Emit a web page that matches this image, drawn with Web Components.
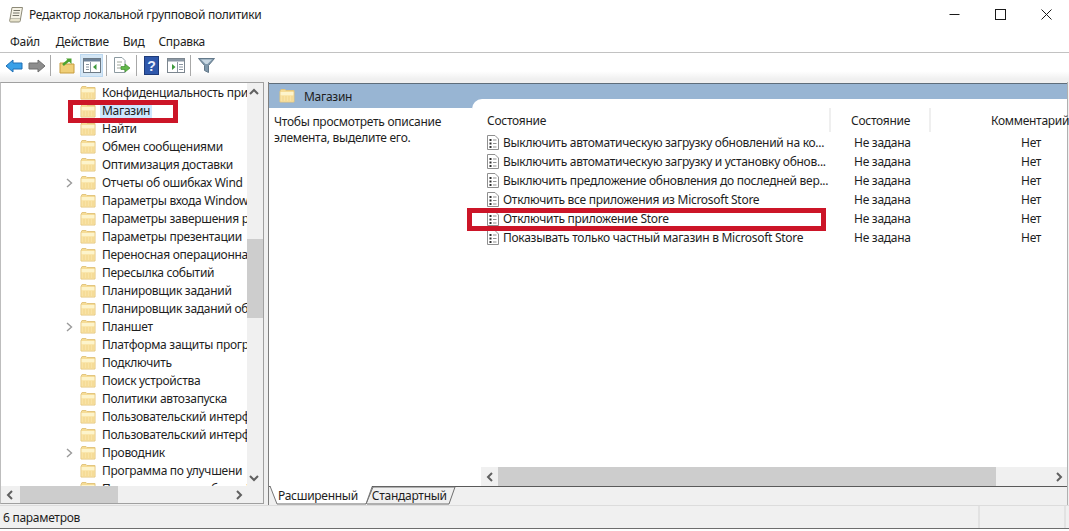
<!DOCTYPE html>
<html lang="ru">
<head>
<meta charset="utf-8">
<title>Редактор локальной групповой политики</title>
<style>
	html, body { margin: 0; padding: 0; background: #fff; }
	body { font: 12px "Noto Sans", "Liberation Sans", sans-serif; color: #1e1e1e; letter-spacing: -0.28px; }
</style>
</head>
<body>
<app-window>
	<win-titlebar slot="title">Редактор локальной групповой политики</win-titlebar>
	<win-menubar slot="menu">
		<span>Файл</span><span>Действие</span><span>Вид</span><span>Справка</span>
	</win-menubar>
	<win-toolbar slot="tools"></win-toolbar>
	<tree-panel slot="tree">
		<tree-item>Конфиденциальность при</tree-item>
		<tree-item selected>Магазин</tree-item>
		<tree-item>Найти</tree-item>
		<tree-item>Обмен сообщениями</tree-item>
		<tree-item>Оптимизация доставки</tree-item>
		<tree-item expandable>Отчеты об ошибках Wind</tree-item>
		<tree-item>Параметры входа Window</tree-item>
		<tree-item>Параметры завершения р</tree-item>
		<tree-item>Параметры презентации</tree-item>
		<tree-item>Переносная операционна</tree-item>
		<tree-item>Пересылка событий</tree-item>
		<tree-item>Планировщик заданий</tree-item>
		<tree-item>Планировщик заданий об</tree-item>
		<tree-item expandable>Планшет</tree-item>
		<tree-item>Платформа защиты прогр</tree-item>
		<tree-item>Подключить</tree-item>
		<tree-item>Поиск устройства</tree-item>
		<tree-item>Политики автозапуска</tree-item>
		<tree-item>Пользовательский интерф</tree-item>
		<tree-item>Пользовательский интерф</tree-item>
		<tree-item expandable>Проводник</tree-item>
		<tree-item>Программа по улучшени</tree-item>
		<tree-item>Предварительная сборка Wind</tree-item>
	</tree-panel>
	<detail-panel slot="detail" heading="Магазин">
		<span slot="desc">Чтобы просмотреть описание элемента, выделите его.</span>
		<policy-row status="Не задана" note="Нет">Выключить автоматическую загрузку обновлений на ко...</policy-row>
		<policy-row status="Не задана" note="Нет">Выключить автоматическую загрузку и установку обнов...</policy-row>
		<policy-row status="Не задана" note="Нет">Выключить предложение обновления до последней вер...</policy-row>
		<policy-row status="Не задана" note="Нет">Отключить все приложения из Microsoft Store</policy-row>
		<policy-row status="Не задана" note="Нет">Отключить приложение Store</policy-row>
		<policy-row status="Не задана" note="Нет">Показывать только частный магазин в Microsoft Store</policy-row>
	</detail-panel>
	<win-statusbar slot="status">6 параметров</win-statusbar>
	<red-mark slot="marks" style="left:68px;top:100px;width:110px;height:23px"></red-mark>
	<red-mark slot="marks" style="left:467px;top:208px;width:359px;height:23px"></red-mark>
</app-window>

<script>
const FOLDER = `
	<svg width="16" height="14" viewBox="0 0 16 14">
		<path d="M1 2.5 L1 13 L15 13 L15 1.5 L7 1.5 L6 0.5 L2 0.5 Z" fill="#f6dc96" stroke="#e3c67f" stroke-width="1"/>
		<rect x="1.5" y="3" width="13" height="3.5" fill="#fdf4cc"/>
		<rect x="1.5" y="6.5" width="13" height="6" fill="#f9e3a6"/>
		<path d="M4 7v5M7 7v5M10 7v5M13 7v5" stroke="#f2d589" stroke-width="1"/>
	</svg>`;

class AppWindow extends HTMLElement {
	constructor() {
		super();
		this.attachShadow({ mode: 'open' });
		this.shadowRoot.innerHTML = `
			<style>
				:host { display: flex; flex-direction: column; position: relative; width: 1069px; height: 531px; overflow: hidden; background: #fff; }
				.main { display: flex; height: 426px; padding-top: 3px; box-sizing: border-box; background: #f0f0f0; gap: 4px; padding-right: 1px; }
				.foot { border-bottom: 1px solid #6d6d6d; }
			</style>
			<slot name="title"></slot>
			<slot name="menu"></slot>
			<slot name="tools"></slot>
			<div class="main">
				<slot name="tree"></slot>
				<slot name="detail"></slot>
			</div>
			<div class="foot"><slot name="status"></slot></div>
			<slot name="marks"></slot>
		`;
	}
}

class WinTitlebar extends HTMLElement {
	constructor() {
		super();
		this.attachShadow({ mode: 'open' });
		this.shadowRoot.innerHTML = `
			<style>
				:host { display: flex; align-items: center; height: 31px; background: #fff; padding-left: 8px; }
				.text { margin-left: 5px; flex: 1; padding-bottom: 3px; }
				.btn { width: 46px; height: 31px; display: flex; align-items: center; justify-content: center; padding-bottom: 3px; box-sizing: border-box; }
				.logo { display: block; margin-top: -2px; }
			</style>
			<svg class="logo" width="16" height="17" viewBox="0 0 16 17">
				<path d="M4 1.5 H14.5 L12.5 13 H2 Z" fill="#f6f3e6" stroke="#8d8a78"/>
				<path d="M2 13 C1 15.5 2 16 3 16 H11 C12 16 12.5 15 12.5 13" fill="#e8e3cc" stroke="#8d8a78"/>
				<path d="M5.5 4.5h6.5M5 7h6.5M4.6 9.5h6.5" stroke="#77766a"/>
			</svg>
			<span class="text"><slot></slot></span>
			<div class="btn"><svg width="11" height="11"><path d="M0.5 5.5 H10.5" stroke="#1a1a1a"/></svg></div>
			<div class="btn"><svg width="11" height="11"><rect x="0.5" y="0.5" width="10" height="10" fill="none" stroke="#1a1a1a"/></svg></div>
			<div class="btn"><svg width="11" height="11"><path d="M0.5 0.5 L10.5 10.5 M10.5 0.5 L0.5 10.5" stroke="#1a1a1a"/></svg></div>
		`;
	}
}

class WinMenubar extends HTMLElement {
	constructor() {
		super();
		this.attachShadow({ mode: 'open' });
		this.shadowRoot.innerHTML = `
			<style>
				:host { display: flex; align-items: center; gap: 14px; height: 21px; padding-left: 10px; background: #fff; }
				::slotted(span) { display: block; }
				::slotted(span:nth-child(2)) { margin-left: 2px; }
			</style>
			<slot></slot>
		`;
	}
}

class WinToolbar extends HTMLElement {
	constructor() {
		super();
		this.attachShadow({ mode: 'open' });
		this.shadowRoot.innerHTML = `
			<style>
				:host { display: flex; align-items: center; height: 27px; box-sizing: border-box; border-top: 1px solid #c2c2c2; padding-left: 2px; padding-bottom: 1px; background: linear-gradient(#fff, #fff 70%, #f0f0f0); }
				.b { width: 23px; height: 23px; display: flex; align-items: center; justify-content: center; }
				.on { background: #d4e6f5; outline: 1px solid #bcd8f0; outline-offset: -1px; }
				.s { width: 1px; height: 21px; background: #a8a8a8; }
			</style>
			<div class="b"><svg width="18" height="14" viewBox="0 0 18 14"><path d="M1 7 L8 1 V4 H17 V10 H8 V13 Z" fill="#38a0e8" stroke="#1f6fb5"/></svg></div>
			<div class="b"><svg width="18" height="14" viewBox="0 0 18 14"><path d="M17 7 L10 1 V4 H1 V10 H10 V13 Z" fill="#8e8e8e" stroke="#6f6f6f"/></svg></div>
			<div class="s" style="margin-left:2px"></div>
			<div class="b" style="margin-left:4px"><svg width="16" height="17" viewBox="0 0 16 17">
				<path d="M1 6 H6 L7 7 H15 V16 H1 Z" fill="#f0cf78" stroke="#c79c3e"/>
				<path d="M4 8 L10 3" stroke="#4da32f" stroke-width="2.5" fill="none"/>
				<path d="M7 1.5 H12.5 V7 Z" fill="#4da32f"/>
			</svg></div>
			<div class="b on" style="margin-left:2px"><svg width="18" height="15" viewBox="0 0 18 15">
				<rect x="0.5" y="0.5" width="17" height="14" fill="#fff" stroke="#6d7a86"/>
				<rect x="1" y="1" width="16" height="2.5" fill="#6d8299"/>
				<path d="M7.5 4v10" stroke="#8a96a2"/>
				<path d="M3 6.5h3M3 9h3M3 11.5h3" stroke="#8a96a2"/>
				<path d="M13.5 6 L10 9 L13.5 12 Z" fill="#3f9a3c"/>
			</svg></div>
			<div class="s" style="margin-left:3px"></div>
			<div class="b" style="margin-left:3px"><svg width="18" height="17" viewBox="0 0 18 17">
				<path d="M1.5 0.5 H9 L12 3.5 V15.5 H1.5 Z" fill="#fff" stroke="#8c9aa0"/>
				<path d="M4 5h5M4 8h4M4 11h4" stroke="#a0a89a"/>
				<path d="M8 9.5 H12 V7 L17 11 L12 15 V12.5 H8 Z" fill="#62b94a" stroke="#3f8f2e" stroke-width="0.7"/>
			</svg></div>
			<div class="s" style="margin-left:3px"></div>
			<div class="b" style="margin-left:3px"><svg width="15" height="19" viewBox="0 0 15 19">
				<rect x="0.5" y="0.5" width="14" height="18" fill="#2f58ab" stroke="#1e3b7a"/>
				<text x="7.5" y="14.5" text-anchor="middle" font-size="14" font-weight="700" font-family="Liberation Sans" fill="#e8eefc">?</text>
			</svg></div>
			<div class="b" style="margin-left:1px"><svg width="18" height="15" viewBox="0 0 18 15">
				<rect x="0.5" y="0.5" width="17" height="14" fill="#fff" stroke="#7c868f"/>
				<rect x="1" y="1" width="16" height="2.5" fill="#8b98a5"/>
				<path d="M10.5 4v10" stroke="#8a96a2"/>
				<path d="M12 6.5h4M12 9h4M12 11.5h4" stroke="#8a96a2"/>
				<path d="M5 6 L8.5 9 L5 12 Z" fill="#3f9a3c"/>
			</svg></div>
			<div class="s" style="margin-left:3px"></div>
			<div class="b" style="margin-left:4px"><svg width="17" height="17" viewBox="0 0 17 17">
				<path d="M0.5 1.5 H16.5 L10.5 8.5 V15.5 L6.5 13.5 V8.5 Z" fill="#7f98ab" stroke="#64798a"/>
				<path d="M3 2.5 H14 L9.5 7 H7.5 Z" fill="#c9d8e3"/>
			</svg></div>
		`;
	}
}

class WinScrollbar extends HTMLElement {
	connectedCallback() {
		if(this.shadowRoot) return;
		this.attachShadow({ mode: 'open' });
		const vert = this.getAttribute('orient') === 'v';
		const before = this.getAttribute('before');
		const size = this.getAttribute('size');
		const back = vert ? 'M1 6 L5 2 L9 6' : 'M6 1 L2 5 L6 9';
		const next = vert ? 'M1 2 L5 6 L9 2' : 'M2 1 L6 5 L2 9';
		const box = vert ? 'width="10" height="8"' : 'width="8" height="10"';
		this.shadowRoot.innerHTML = `
			<style>
				:host { display: flex; flex-direction: ${vert ? 'column' : 'row'}; background: #f0f0f0; ${vert ? 'width:16px' : 'height:17px'}; }
				.arrow { flex: none; ${vert ? 'height:17px;padding-right:2px;box-sizing:border-box' : 'width:17px'}; display: flex; align-items: center; justify-content: center; }
				.track { flex: 1; display: flex; flex-direction: ${vert ? 'column' : 'row'}; }
				.thumb { background: #cdcdcd; ${vert ? `margin-top:${before}px;height:${size}px` : `margin-left:${before}px;width:${size}px`}; }
				path { fill: none; stroke: #606060; stroke-width: 2; }
			</style>
			<div class="arrow"><svg ${box}><path d="${back}"/></svg></div>
			<div class="track"><div class="thumb"></div></div>
			<div class="arrow"><svg ${box}><path d="${next}"/></svg></div>
		`;
	}
}

class TreePanel extends HTMLElement {
	constructor() {
		super();
		this.attachShadow({ mode: 'open' });
		this.shadowRoot.innerHTML = `
			<style>
				:host { display: grid; grid-template-columns: 246px 16px; grid-template-rows: 1fr 17px; width: 264px; box-sizing: border-box; height: 422px; background: #fff; border: 1px solid #a0a0a0; border-left-color: #bdbdbd; }
				.rows { overflow: hidden; padding-top: 1px; }
				.corner { background: #f0f0f0; }
			</style>
			<div class="rows"><slot></slot></div>
			<win-scrollbar orient="v" before="139" size="79"></win-scrollbar>
			<win-scrollbar orient="h" before="2" size="98"></win-scrollbar>
			<div class="corner"></div>
		`;
	}
}

class TreeItem extends HTMLElement {
	connectedCallback() {
		if(this.shadowRoot) return;
		this.attachShadow({ mode: 'open' });
		const open = this.hasAttribute('expandable');
		this.shadowRoot.innerHTML = `
			<style>
				:host { display: flex; align-items: center; height: 18px; white-space: nowrap; padding-left: 64px; }
				.tw { width: 15px; flex: none; display: flex; align-items: center; padding-left: 1px; box-sizing: border-box; }
				.tw path { fill: none; stroke: #9a9a9a; stroke-width: 1.4; }
				.ic { flex: none; width: 16px; height: 14px; }
				.lab { margin-left: 4px; padding: 0 2px; line-height: 16px; }
				:host([selected]) .lab { background: #cde8ff; }
			</style>
			<div class="tw">${open ? '<svg width="7" height="10"><path d="M1 1 L5.5 5 L1 9"/></svg>' : ''}</div>
			<div class="ic">${FOLDER}</div>
			<div class="lab"><slot></slot></div>
		`;
	}
}

class DetailPanel extends HTMLElement {
	connectedCallback() {
		if(this.shadowRoot) return;
		this.attachShadow({ mode: 'open' });
		this.shadowRoot.innerHTML = `
			<style>
				:host { flex: 1; min-width: 0; height: 423px; display: flex; flex-direction: column; box-sizing: border-box; border-left: 1px solid #7f7f7f; border-right: 1px solid #b0b0b0; }
				.body { height: 404px; margin-top: 1px; display: grid; grid-template-columns: 203px 1fr; border-top: 1px solid #5f6d7a; background: #fff; border-bottom: 1px solid #5a5a5a; box-sizing: border-box; flex: none; }
				.head { display: flex; align-items: center; height: 24px; background: #98b5d3; padding-left: 10px; gap: 9px; }
				.desc { padding: 6px 5px; line-height: 16px; }
				.right { background: #98b5d3; padding-top: 15px; display: flex; min-width: 0; }
				.list { flex: 1; min-width: 0; background: #fff; border-top-left-radius: 10px; display: flex; flex-direction: column; }
				.cols { display: grid; grid-template-columns: 359px 100px 1fr; height: 24px; margin-top: 9px; flex: none; }
				.cols div { display: flex; align-items: center; white-space: nowrap; }
				.c1 { padding-left: 15px; border-right: 2px solid #efefef; }
				.c2 { padding-left: 20px; border-right: 2px solid #efefef; }
				.c3 { padding-left: 60px; }
				.rows { flex: 1; padding-top: 1px; }
				win-scrollbar { margin-left: 9px; flex: none; height: 19px; }
				.tabs { position: relative; flex: none; height: 18px; display: flex; padding-left: 9px; gap: 14px; line-height: 18px; }
				.tabs svg { position: absolute; left: 0; top: -1px; }
				.tabs span { position: relative; }
			</style>
			<div class="body">
				<div>
					<div class="head">${FOLDER}<span>${this.getAttribute('heading')}</span></div>
					<div class="desc"><slot name="desc"></slot></div>
				</div>
				<div class="right">
					<div class="list">
						<div class="cols"><div class="c1">Состояние</div><div class="c2">Состояние</div><div class="c3">Комментарий</div></div>
						<div class="rows"><slot></slot></div>
						<win-scrollbar orient="h" before="0" size="498"></win-scrollbar>
					</div>
				</div>
			</div>
			<div class="tabs">
				<svg width="200" height="20">
					<path d="M104 1 L97 18 M104 1 H186 L180 18 H98" fill="none" stroke="#6f6f6f"/>
					<path d="M1 0 H103 L97 17 H8 Z" fill="#fff"/>
					<path d="M1 0 L8 18 H97 L103 1" fill="none" stroke="#777"/>
				</svg>
				<span>Расширенный</span><span>Стандартный</span>
			</div>
		`;
	}
}

class PolicyRow extends HTMLElement {
	connectedCallback() {
		if(this.shadowRoot) return;
		this.attachShadow({ mode: 'open' });
		this.shadowRoot.innerHTML = `
			<style>
				:host { display: grid; grid-template-columns: 359px 100px 1fr; height: 19px; align-items: center; white-space: nowrap; }
				.name { display: flex; align-items: center; gap: 4px; padding-left: 15px; overflow: hidden; }
				.st { padding-left: 23px; }
				.nt { padding-left: 90px; }
				svg { flex: none; }
			</style>
			<div class="name">
				<svg width="12" height="15" viewBox="0 0 12 15">
					<path d="M0.5 0.5 H8 L11.5 4 V14.5 H0.5 Z" fill="#fff" stroke="#8f8f8f"/>
					<path d="M2.5 4h2v2h-2zM2.5 7.5h2v2h-2zM2.5 11h2v2h-2z" fill="#303030"/>
					<path d="M6 5h3.5M6 8.5h3.5M6 12h3.5" stroke="#8f8f8f"/>
				</svg>
				<span><slot></slot></span>
			</div>
			<div class="st">${this.getAttribute('status')}</div>
			<div class="nt">${this.getAttribute('note')}</div>
		`;
	}
}

class WinStatusbar extends HTMLElement {
	constructor() {
		super();
		this.attachShadow({ mode: 'open' });
		this.shadowRoot.innerHTML = `
			<style>
				:host { display: grid; grid-template-columns: 980px 86px 1fr; height: 23px; background: #f0f0f0; box-sizing: border-box; border-top: 1px solid #dcdcdc; }
				div { display: flex; align-items: center; padding: 1px 0 0 3px; border-right: 2px solid #e2e2e2; box-sizing: border-box; }
			</style>
			<div><slot></slot></div><div></div>
		`;
	}
}

class RedMark extends HTMLElement {
	constructor() {
		super();
		this.attachShadow({ mode: 'open' });
		this.shadowRoot.innerHTML = `
			<style>
				:host { display: block; position: absolute; box-sizing: border-box; border: 5px solid #cc1528; }
			</style>
		`;
	}
}

customElements.define('win-scrollbar', WinScrollbar);
customElements.define('app-window', AppWindow);
customElements.define('win-titlebar', WinTitlebar);
customElements.define('win-menubar', WinMenubar);
customElements.define('win-toolbar', WinToolbar);
customElements.define('tree-panel', TreePanel);
customElements.define('tree-item', TreeItem);
customElements.define('detail-panel', DetailPanel);
customElements.define('policy-row', PolicyRow);
customElements.define('win-statusbar', WinStatusbar);
customElements.define('red-mark', RedMark);
</script>
</body>
</html>
